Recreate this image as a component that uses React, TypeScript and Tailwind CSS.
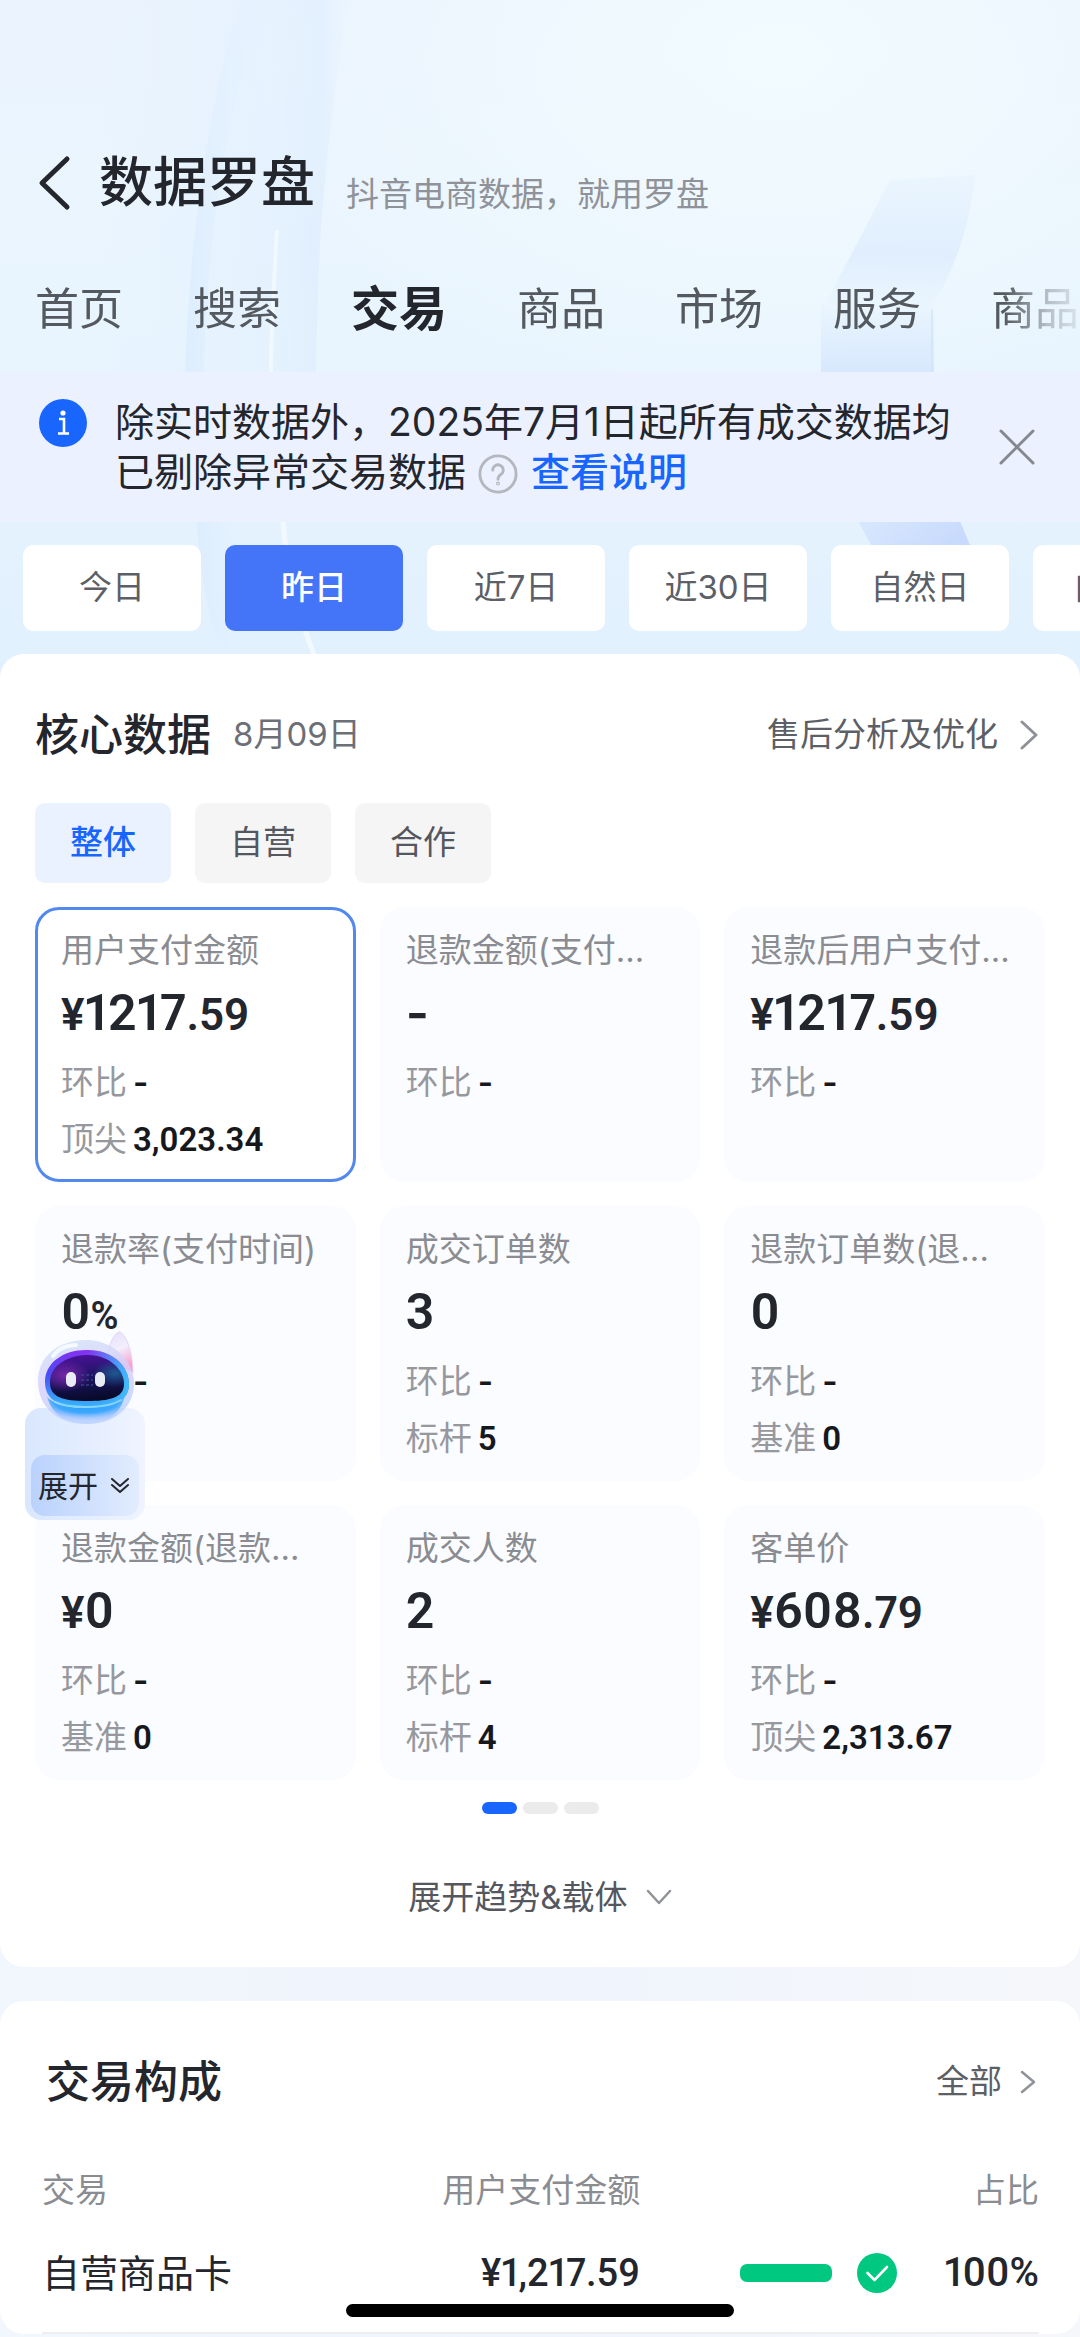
import type { ReactNode } from "react";

type Metric = {
  label: string;
  prefix?: string;
  value: string;
  decimals?: string;
  suffix?: string;
  benchmark?: { name: string; value: string };
};

const tabs = ["首页", "搜索", "交易", "商品", "市场", "服务", "商品"];
const ranges = ["今日", "昨日", "近7日", "近30日", "自然日", "自然周"];
const scopes = ["整体", "自营", "合作"];

const metrics: Metric[] = [
  { label: "用户支付金额", prefix: "¥", value: "1217", decimals: ".59", benchmark: { name: "顶尖", value: "3,023.34" } },
  { label: "退款金额(支付...", value: "-" },
  { label: "退款后用户支付...", prefix: "¥", value: "1217", decimals: ".59" },
  { label: "退款率(支付时间)", value: "0", suffix: "%" },
  { label: "成交订单数", value: "3", benchmark: { name: "标杆", value: "5" } },
  { label: "退款订单数(退...", value: "0", benchmark: { name: "基准", value: "0" } },
  { label: "退款金额(退款...", prefix: "¥", value: "0", benchmark: { name: "基准", value: "0" } },
  { label: "成交人数", value: "2", benchmark: { name: "标杆", value: "4" } },
  { label: "客单价", prefix: "¥", value: "608", decimals: ".79", benchmark: { name: "顶尖", value: "2,313.67" } },
];

function Stroke({ d, box, className, width }: { d: string; box: string; className: string; width: number }) {
  return (
    <svg viewBox={box} className={className} fill="none" stroke="currentColor" strokeWidth={width} strokeLinecap="round" strokeLinejoin="round" aria-hidden="true">
      <path d={d} />
    </svg>
  );
}

function Backdrop() {
  return (
    <svg className="absolute inset-x-0 top-0 h-[700px] w-full" viewBox="0 0 1080 700" preserveAspectRatio="none" aria-hidden="true">
      <defs>
        <linearGradient id="sky" x1="0" y1="0" x2="0" y2="1">
          <stop offset="0" stopColor="#ebf4fe" />
          <stop offset="0.45" stopColor="#e9f5fe" />
          <stop offset="1" stopColor="#e1f0fe" />
        </linearGradient>
        <radialGradient id="glow" cx="0.72" cy="0.08" r="0.5">
          <stop offset="0" stopColor="#f2fbfe" />
          <stop offset="1" stopColor="#f2fbfe" stopOpacity="0" />
        </radialGradient>
        <linearGradient id="ribbon" x1="0" y1="0" x2="1" y2="0">
          <stop offset="0" stopColor="#dfeefe" stopOpacity="0" />
          <stop offset="0.7" stopColor="#dfeefe" stopOpacity="0.6" />
          <stop offset="0.9" stopColor="#d9eafd" stopOpacity="0.8" />
          <stop offset="1" stopColor="#e2f0fe" stopOpacity="0.3" />
        </linearGradient>
        <linearGradient id="edge" x1="0" y1="0" x2="1" y2="0">
          <stop offset="0" stopColor="#d6e9fd" stopOpacity="0.8" />
          <stop offset="1" stopColor="#e4f1fe" stopOpacity="0.1" />
        </linearGradient>
        <linearGradient id="haze" x1="0" y1="0" x2="0" y2="1">
          <stop offset="0" stopColor="#dbeafd" stopOpacity="0.2" />
          <stop offset="0.6" stopColor="#dbeafd" stopOpacity="0.7" />
          <stop offset="1" stopColor="#dbeafd" stopOpacity="0" />
        </linearGradient>
        <linearGradient id="column" x1="0" y1="0" x2="0" y2="1">
          <stop offset="0" stopColor="#d8e8fd" stopOpacity="0" />
          <stop offset="1" stopColor="#d8e8fd" />
        </linearGradient>
        <linearGradient id="prism" x1="0" y1="0" x2="1" y2="0.3">
          <stop offset="0" stopColor="#d8e8fd" />
          <stop offset="1" stopColor="#c8dafd" />
        </linearGradient>
      </defs>
      <rect width="1080" height="700" fill="url(#sky)" />
      <path d="M100 0H348C335 90 320 190 318 300C317 330 316 350 316 372H100Z" fill="url(#ribbon)" opacity="0.7" />
      <rect width="1080" height="700" fill="url(#glow)" />
      <path d="M240 0H262C225 120 206 250 204 372H185C190 240 205 120 240 0Z" fill="url(#edge)" opacity="0.7" />
      <path d="M277 230C274 280 271 330 271 372" stroke="#f3faff" strokeWidth="4" fill="none" opacity="0.8" />
      <path d="M283 521C286 570 300 620 316 660" stroke="#f1f9ff" strokeWidth="5" fill="none" />
      <path d="M197 521H240V655H222C206 610 199 565 197 521Z" fill="url(#edge)" opacity="0.8" />
      <path d="M890 180L975 175C970 225 955 270 930 310L825 305Z" fill="url(#haze)" />
      <path d="M821 300H934V372H821Z" fill="url(#column)" />
      <path d="M932 310V372" stroke="#d3e3fb" strokeWidth="2" opacity="0.7" />
      <path d="M858 521H960L972 550H874Z" fill="url(#prism)" />
    </svg>
  );
}

function MetricCard({ metric, active }: { metric: Metric; active: boolean }) {
  return (
    <button
      type="button"
      aria-pressed={active}
      className={
        active
          ? "flex h-[275px] flex-col items-start rounded-[24px] border-3 border-[#5388ee] bg-white pt-4 pl-[23px] text-left"
          : "flex h-[275px] flex-col items-start rounded-[24px] border-3 border-transparent bg-[#fafcff] pt-4 pl-[23px] text-left"
      }
    >
      <span className="h-12 text-[33px] leading-[48px] whitespace-nowrap text-[#8a8c91]">{metric.label}</span>
      <span className="mt-[7px] flex h-16 items-baseline font-[Roboto] text-[50px] leading-[64px] font-semibold whitespace-nowrap text-[#24262d] proportional-nums">
        {metric.prefix && <span className="text-[44px]">{metric.prefix}</span>}
        {metric.value === "-" ? <span className="font-[Inter]">-</span> : metric.value}
        {metric.decimals && <span className="text-[44px]">{metric.decimals}</span>}
        {metric.suffix && <span className="text-[38px]">{metric.suffix}</span>}
      </span>
      <span className="mt-[9px] flex h-[57px] items-center gap-[6px] text-[33px] leading-[57px] text-[#96989d]">
        环比
        <span className="font-[Inter] font-semibold text-[#17181c]">-</span>
      </span>
      {metric.benchmark && (
        <span className="flex h-[57px] items-center gap-[6px] text-[33px] leading-[57px] text-[#96989d]">
          {metric.benchmark.name}
          <span className="font-[Roboto] font-semibold text-[#17181c]">{metric.benchmark.value}</span>
        </span>
      )}
    </button>
  );
}

function Robot() {
  return (
    <svg viewBox="0 0 110 100" className="h-[100px] w-[110px]" aria-hidden="true">
      <defs>
        <linearGradient id="shell" x1="0" y1="0" x2="0.3" y2="1">
          <stop offset="0" stopColor="#cfe3f8" />
          <stop offset="0.55" stopColor="#d9cdfb" />
          <stop offset="1" stopColor="#b9d2ff" />
        </linearGradient>
        <linearGradient id="ring" x1="0.6" y1="0" x2="0.45" y2="1">
          <stop offset="0" stopColor="#8a2ff0" />
          <stop offset="0.5" stopColor="#4a4cf5" />
          <stop offset="1" stopColor="#35b8fb" />
        </linearGradient>
        <linearGradient id="rim" x1="0" y1="0" x2="1" y2="0">
          <stop offset="0.5" stopColor="#3fc0fb" stopOpacity="0" />
          <stop offset="1" stopColor="#3fc0fb" />
        </linearGradient>
        <linearGradient id="visor" x1="0.4" y1="0" x2="0.55" y2="1">
          <stop offset="0" stopColor="#4a1296" />
          <stop offset="0.5" stopColor="#1b1460" />
          <stop offset="1" stopColor="#060a24" />
        </linearGradient>
        <radialGradient id="shine" cx="0.2" cy="0.45" r="0.35">
          <stop offset="0" stopColor="#8b2bb8" stopOpacity="0.8" />
          <stop offset="1" stopColor="#8b2bb8" stopOpacity="0" />
        </radialGradient>
        <radialGradient id="teal" cx="0.88" cy="0.4" r="0.3">
          <stop offset="0" stopColor="#1d6a9a" stopOpacity="0.8" />
          <stop offset="1" stopColor="#1d6a9a" stopOpacity="0" />
        </radialGradient>
        <radialGradient id="chin" cx="0.5" cy="0.2" r="0.7">
          <stop offset="0" stopColor="#1a9bfa" />
          <stop offset="0.6" stopColor="#3fa8fc" />
          <stop offset="1" stopColor="#b9c8ff" stopOpacity="0.2" />
        </radialGradient>
        <linearGradient id="ear" x1="0" y1="0" x2="0.3" y2="1">
          <stop offset="0" stopColor="#e4def9" />
          <stop offset="0.5" stopColor="#f3effd" />
          <stop offset="1" stopColor="#f79fcb" />
        </linearGradient>
      </defs>
      <path d="M77 24C79 12 84 4 88 3C94 3 102 22 102 44L86 36Z" fill="url(#ear)" stroke="#e0d8f8" strokeWidth="1" />
      <path d="M54 11C80 10 103 30 103 54C103 80 82 95 56 95C26 95 7 78 7 52C7 28 26 12 54 11Z" fill="url(#shell)" opacity="0.8" />
      <path d="M22 27C28 19 37 16 45 16" stroke="#f4faff" strokeWidth="4" strokeLinecap="round" fill="none" />
      <path d="M16 68C30 82 78 84 94 66C90 86 74 95 56 95C38 95 22 88 16 68Z" fill="url(#chin)" />
      <path d="M55 21C80 20 98 36 98 55C98 72 82 79 56 79C28 79 14 71 14 53C14 34 32 21 55 21Z" fill="url(#ring)" />
      <path d="M55 21C80 20 98 36 98 55C98 72 82 79 56 79C28 79 14 71 14 53C14 34 32 21 55 21Z" fill="url(#rim)" />
      <path d="M24 73C38 80 76 80 90 71" stroke="#a6e1ff" strokeWidth="2" fill="none" strokeLinecap="round" opacity="0.7" />
      <path d="M55 26C78 25 93 41 93 55C93 69 78 72 56 72C32 72 19 68 19 54C19 38 34 27 55 26Z" fill="url(#visor)" />
      <path d="M55 26C78 25 93 41 93 55C93 69 78 72 56 72C32 72 19 68 19 54C19 38 34 27 55 26Z" fill="url(#shine)" />
      <path d="M55 26C78 25 93 41 93 55C93 69 78 72 56 72C32 72 19 68 19 54C19 38 34 27 55 26Z" fill="url(#teal)" />
      <path d="M50 46H62M50 51H62M50 56H62" stroke="#3d3f8c" strokeWidth="1.5" strokeDasharray="3 2" />
      <rect x="35" y="43" width="10" height="15" rx="5" fill="#e9ebf5" />
      <rect x="64" y="43" width="10" height="15" rx="5" fill="#e9ebf5" />
    </svg>
  );
}

function Assistant() {
  return (
    <div className="absolute top-[422px] left-[25px] h-[191px] w-[120px]">
      <div className="absolute inset-x-0 bottom-0 flex h-[112px] items-end rounded-[16px] bg-linear-to-r from-[#d9e7fe] to-[#eff4ff] px-[6px] pb-1">
        <button type="button" className="flex h-[61px] w-full items-center gap-3 rounded-[14px] bg-linear-to-r from-[#bad2fd] to-[#e2ecfe] pl-[7px] text-[30px] leading-[40px] whitespace-nowrap text-[#24262d]">
          展开
          <Stroke box="0 0 20 16" className="h-4 w-5 shrink-0" width={2} d="M2 1L10 8L18 1M2 7L10 14L18 7" />
        </button>
      </div>
      <div className="absolute top-0 left-[6px]">
        <Robot />
      </div>
    </div>
  );
}

function Card({ children }: { children: ReactNode }) {
  return <section className="relative rounded-[24px] bg-white">{children}</section>;
}

export default function App() {
  return (
    <div className="relative min-h-screen overflow-hidden bg-linear-to-r from-[#f1f7fd] via-[#f0f4fd] to-[#f5f7fa] font-[Inter,'Noto_Sans_CJK_SC',sans-serif] text-[#24262d]">
      <Backdrop />
      <div className="relative">
        <header className="pt-[121px]">
          <div className="flex h-[124px] items-center pl-[38px]">
            <button type="button" aria-label="返回">
              <Stroke box="0 0 34 56" className="h-14 w-[34px]" width={5} d="M29 4L4 28L29 52" />
            </button>
            <div className="ml-[27px] flex items-end gap-[31px]">
              <h1 className="text-[54px] leading-[80px] font-medium">数据罗盘</h1>
              <p className="text-[33px] leading-[58px] text-[#8f9298]">抖音电商数据，就用罗盘</p>
            </div>
          </div>
          <nav className="flex h-[127px] items-center gap-[70px] overflow-hidden pl-[35px] text-[44px] leading-[60px] whitespace-nowrap text-[#54585f] [mask-image:linear-gradient(to_right,black_93%,rgba(0,0,0,0.35)_97%,rgba(0,0,0,0.1)_100%)]">
            {tabs.map((tab, i) => (
              <a
                key={i}
                href={"#tab-" + i}
                aria-current={i === 2 ? "page" : undefined}
                className={i === 2 ? "shrink-0 text-[48px] font-bold text-[#24262d]" : "shrink-0"}
              >
                {tab}
              </a>
            ))}
          </nav>
        </header>

        <div className="flex bg-[#ebf1fe] pt-[25px] pr-[44px] pb-[25px] pl-[39px]">
          <svg viewBox="0 0 48 48" className="mt-[2px] size-12 shrink-0" aria-hidden="true">
            <circle cx="24" cy="24" r="24" fill="#1966ff" />
            <circle cx="24" cy="14" r="2.6" fill="#fff" />
            <path d="M20 20H25V34M19 34.500H30" stroke="#fff" strokeWidth="2.6" fill="none" />
          </svg>
          <p className="ml-7 w-[840px] text-[39px] leading-[50px]">
            除实时数据外，2025年7月1日起所有成交数据均已剔除异常交易数据
            <button type="button" aria-label="帮助" className="mr-[13px] ml-[12px] inline-block align-[-8px]">
              <svg viewBox="0 0 42 42" className="block size-[40px]" fill="none" stroke="#b4b7bd" strokeWidth="3" strokeLinecap="round" aria-hidden="true">
                <circle cx="21" cy="21" r="19" />
                <path d="M15.500 17a5.500 5.500 0 1 1 8.500 4.500c-2 1.500-3 2.500-3 5" />
                <circle cx="21" cy="31" r="0.6" />
              </svg>
            </button>
            <a href="#explain" className="font-medium text-[#1966ff]">查看说明</a>
          </p>
          <button type="button" aria-label="关闭" className="ml-auto self-center text-[#85888f]">
            <Stroke box="0 0 38 38" className="size-[38px]" width={3} d="M3 3L35 35M35 3L3 35" />
          </button>
        </div>

        <div className="flex gap-6 overflow-hidden py-[23px] pl-[23px]">
          {ranges.map((range, i) => (
            <button
              key={range}
              type="button"
              aria-pressed={i === 1}
              className={
                i === 1
                  ? "h-[86px] w-[178px] shrink-0 rounded-[10px] bg-[#4475f8] text-[33px] font-medium text-white"
                  : "h-[86px] w-[178px] shrink-0 rounded-[10px] bg-white text-[33px] text-[#5c5f66]"
              }
            >
              {range}
            </button>
          ))}
        </div>

        <main className="flex flex-col gap-[34px]">
          <Card>
            <div className="px-[35px] pt-[51px]">
              <div className="flex h-[60px] items-center">
                <h2 className="text-[44px] leading-[60px] font-medium">核心数据</h2>
                <span className="ml-[22px] text-[33px] text-[#6c6f76]">8月09日</span>
                <a href="#after-sale" className="mr-[7px] ml-auto flex items-center gap-[22px] text-[33px] text-[#5c5f66]">
                  售后分析及优化
                  <Stroke box="0 0 18 30" className="h-[30px] w-[18px] text-[#8f9298]" width={3} d="M2 2L16 15L2 28" />
                </a>
              </div>
              <div className="mt-[38px] flex gap-6">
                {scopes.map((scope, i) => (
                  <button
                    key={scope}
                    type="button"
                    aria-pressed={i === 0}
                    className={
                      i === 0
                        ? "h-20 w-[136px] rounded-[10px] bg-[#ebf2ff] text-[33px] font-medium text-[#1966ff]"
                        : "h-20 w-[136px] rounded-[10px] bg-[#f5f5f6] text-[33px] text-[#54575e]"
                    }
                  >
                    {scope}
                  </button>
                ))}
              </div>
            </div>
            <div className="relative mt-6">
              <div className="grid grid-cols-3 gap-6 px-[35px]">
                {metrics.map((metric, i) => (
                  <MetricCard key={metric.label} metric={metric} active={i === 0} />
                ))}
              </div>
              <Assistant />
            </div>
            <div className="mt-[22px] flex justify-center gap-[6px]">
              <span className="h-3 w-[35px] rounded-full bg-[#1966ff]" />
              <span className="h-3 w-[35px] rounded-full bg-[#ebebec]" />
              <span className="h-3 w-[35px] rounded-full bg-[#ebebec]" />
            </div>
            <button type="button" className="mx-auto mt-[54px] flex items-center gap-[18px] pb-[41px] text-[33px] leading-[58px] text-[#54575e]">
              展开趋势&amp;载体
              <Stroke box="0 0 26 16" className="h-4 w-[26px] text-[#8f9298]" width={2.500} d="M2 2L13 14L24 2" />
            </button>
          </Card>

          <Card>
            <div className="flex items-center pt-[51px] pr-[44px] pl-[46px]">
              <h2 className="text-[44px] leading-[60px] font-medium">交易构成</h2>
              <a href="#all" className="ml-auto flex items-center gap-[18px] text-[33px] text-[#5c5f66]">
                全部
                <Stroke box="0 0 16 24" className="h-6 w-4 text-[#8f9298]" width={2.500} d="M2 2L14 12L2 22" />
              </a>
            </div>
            <div className="mt-[54px] pr-[41px] pl-[42px]">
              <table className="w-full table-fixed">
                <thead>
                  <tr className="h-[48px] text-[33px] leading-[48px] text-[#8a8c91]">
                    <th className="w-[30%] text-left font-normal">交易</th>
                    <th className="w-[30%] text-right font-normal">用户支付金额</th>
                    <th className="w-[40%] text-right font-normal">占比</th>
                  </tr>
                </thead>
                <tbody>
                  <tr className="h-[119px] border-b-2 border-[#eeeeef] text-[38px]">
                    <td>自营商品卡</td>
                    <td className="text-right font-[Roboto] font-medium proportional-nums">¥1,217.59</td>
                    <td>
                      <div className="flex items-center justify-end">
                        <span className="h-[18px] w-[92px] rounded-[7px] bg-[#00c881]" />
                        <svg viewBox="0 0 40 40" className="ml-[25px] size-10" aria-hidden="true">
                          <circle cx="20" cy="20" r="20" fill="#00c881" />
                          <path d="M10.500 20L17.500 27L30 14" stroke="#fff" strokeWidth="2.600" fill="none" strokeLinecap="round" strokeLinejoin="round" />
                        </svg>
                        <span className="ml-[47px] font-[Roboto] text-[40px] font-medium proportional-nums">100%</span>
                      </div>
                    </td>
                  </tr>
                </tbody>
              </table>
            </div>
          </Card>
        </main>
      </div>
      <div className="fixed inset-x-0 bottom-5 mx-auto h-[13px] w-[36%] rounded-full bg-black" />
    </div>
  );
}
